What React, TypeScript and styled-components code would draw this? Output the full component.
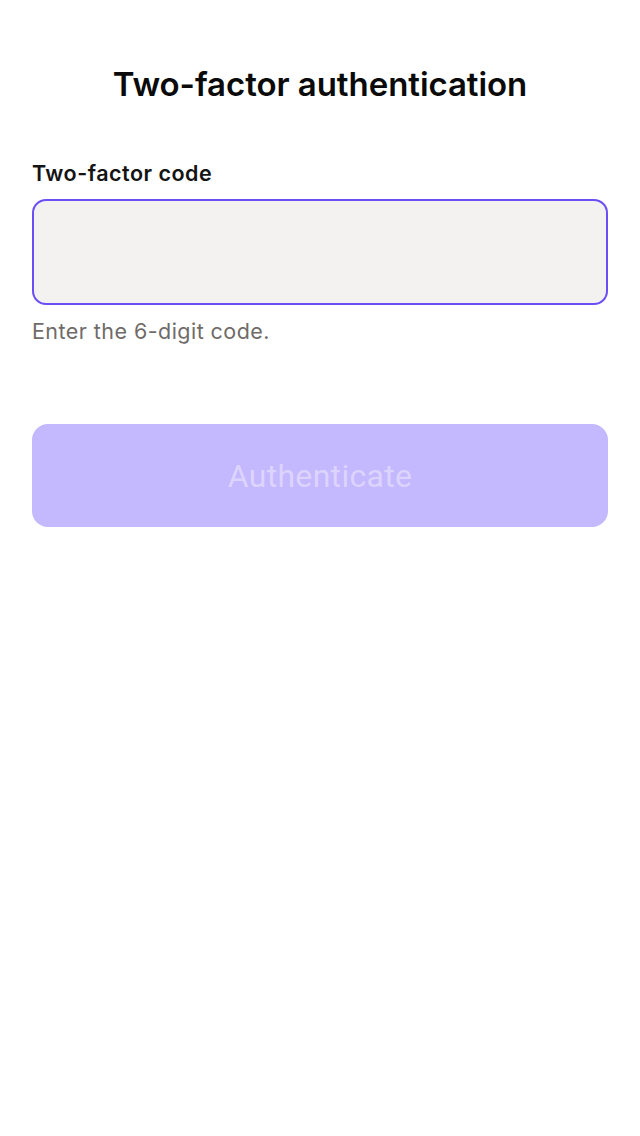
import React from "react";
import styled, { createGlobalStyle } from "styled-components";

const Global = createGlobalStyle`
  html, body { margin: 0; padding: 0; background: #ffffff; }
  body { font-family: Inter, "Noto Sans", sans-serif; -webkit-font-smoothing: antialiased; }
  * { box-sizing: border-box; }
`;

const Page = styled.main`
  display: flex;
  flex-direction: column;
  padding: 64px 32px 0;
  min-height: 1136px;
`;

const Title = styled.h1`
  margin: 0;
  font-family: Inter, sans-serif;
  font-weight: 600;
  font-size: 33px;
  line-height: 40px;
  color: #0a0a0a;
  text-align: center;
  letter-spacing: -0.05px;
`;

const Field = styled.div`
  display: flex;
  flex-direction: column;
  margin-top: 56px;
`;

const Label = styled.label`
  font-family: Inter, sans-serif;
  font-weight: 600;
  font-size: 21.5px;
  line-height: 26px;
  color: #141414;
  letter-spacing: 0.5px;
  margin-bottom: 13px;
`;

const Input = styled.input`
  height: 106px;
  width: 100%;
  border: 2px solid #6b4ef5;
  border-radius: 14px;
  background: #f3f2f1;
  outline: none;
  font-size: 24px;
  padding: 0 16px;
`;

const Helper = styled.p`
  margin: 13px 0 0;
  font-family: Inter, sans-serif;
  font-size: 21.5px;
  line-height: 26px;
  color: #6f6b68;
  letter-spacing: 0.45px;
`;

const Button = styled.button`
  margin-top: 80px;
  height: 103px;
  width: 100%;
  border: none;
  border-radius: 16px;
  background: #c4b8fe;
  color: #dcd4fd;
  font-family: Roboto, sans-serif;
  font-size: 32px;
  letter-spacing: 0.3px;
  font-weight: 400;
`;

export default function App() {
  return (
    <>
      <Global />
      <Page>
        <Title>Two-factor authentication</Title>
        <Field>
          <Label>Two-factor code</Label>
          <Input aria-label="Two-factor code" />
          <Helper>Enter the 6-digit code.</Helper>
        </Field>
        <Button disabled>Authenticate</Button>
      </Page>
    </>
  );
}
